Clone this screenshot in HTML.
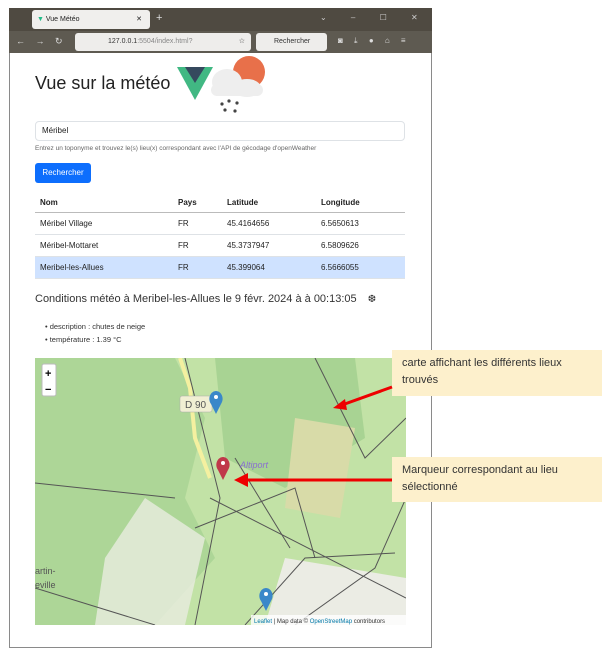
<!DOCTYPE html>
<html><head><meta charset="utf-8"><style>
html,body{margin:0;width:602px;height:656px;overflow:hidden}
body{background:#fff;font-family:"Liberation Sans",sans-serif;position:relative}
.a{position:absolute}
.win{left:9px;top:8px;width:423px;height:640px;border:1px solid #8a8a8a;box-sizing:border-box;background:#fff}
td,th{font-size:8px;text-align:left;padding:0 0 0 5px;height:21px;border-bottom:1px solid #dee2e6}
th{font-weight:bold;height:20px;border-bottom:1px solid #bbb}
</style></head><body>
<div class="a win"></div>
<div class="a" style="left:9px;top:8px;width:423px;height:23px;background:#4f4a41"></div>
<div class="a" style="left:32px;top:10px;width:118px;height:19px;background:#f0efed;border-radius:3px;font-size:7px;line-height:19px;color:#222"><span style="color:#2b8;margin-left:5px">▼</span> Vue Météo<span style="float:right;margin-right:8px">✕</span></div>
<div class="a" style="left:156px;top:12px;color:#ddd;font-size:11px">+</div>
<div class="a" style="left:320px;top:13px;color:#ccc;font-size:8px;word-spacing:22px">⌄ – ☐ ✕</div>
<div class="a" style="left:9px;top:31px;width:423px;height:22px;background:#5e5a51"></div>
<div class="a" style="left:16px;top:36px;color:#ddd;font-size:9px;word-spacing:8px">← → ↻</div>
<div class="a" style="left:75px;top:33px;width:176px;height:18px;background:#eeedeb;border-radius:3px;font-size:7px;line-height:18px;color:#333;padding-left:33px;box-sizing:border-box;text-align:left">127.0.0.1<span style="color:#888">:5504/index.html?</span><span style="position:absolute;right:6px">☆</span></div>
<div class="a" style="left:256px;top:33px;width:71px;height:18px;background:#eeedeb;border-radius:3px;font-size:7px;line-height:18px;color:#333;padding-left:18px;box-sizing:border-box">Rechercher</div>
<div class="a" style="left:338px;top:36px;color:#ddd;font-size:8px;word-spacing:9px">◙ ⤓ ● ⌂ ≡</div>

<div class="a" style="left:35px;top:73px;font-size:18px;color:#222;white-space:nowrap">Vue sur la météo</div>
<svg class="a" style="left:175px;top:55px" width="95" height="60">
<polygon points="2,12 38,12 20,45" fill="#41b883"/><polygon points="10,12 30,12 20,28" fill="#35495e"/>
<circle cx="74" cy="17" r="16" fill="#e8704a"/>
<ellipse cx="52" cy="27" rx="15" ry="13" fill="#eee"/><ellipse cx="72" cy="33" rx="14" ry="9" fill="#eee"/><rect x="36" y="29" width="52" height="12" rx="6" fill="#eee"/>
<g fill="#444"><circle cx="47" cy="49" r="1.6"/><circle cx="54" cy="46" r="1.6"/><circle cx="62" cy="48" r="1.6"/><circle cx="50" cy="55" r="1.6"/><circle cx="60" cy="56" r="1.6"/></g>
</svg>
<div class="a" style="left:35px;top:121px;width:370px;height:20px;border:1px solid #dee2e6;border-radius:4px;box-sizing:border-box;font-size:8px;line-height:18px;padding-left:6px;color:#222">Méribel</div>
<div class="a" style="left:35px;top:145px;font-size:6.5px;color:#666;white-space:nowrap">Entrez un toponyme et trouvez le(s) lieu(x) correspondant avec l'API de gécodage d'openWeather</div>
<div class="a" style="left:35px;top:163px;width:56px;height:20px;background:#0d6efd;border-radius:3px;color:#fff;font-size:8px;line-height:20px;text-align:center">Rechercher</div>
<table class="a" style="left:35px;top:192px;width:370px;border-collapse:collapse;color:#222">
<tr><th style="width:133px">Nom</th><th style="width:44px">Pays</th><th style="width:89px">Latitude</th><th>Longitude</th></tr>
<tr><td>Méribel Village</td><td>FR</td><td>45.4164656</td><td>6.5650613</td></tr>
<tr><td>Méribel-Mottaret</td><td>FR</td><td>45.3737947</td><td>6.5809626</td></tr>
<tr style="background:#cfe2ff"><td>Meribel-les-Allues</td><td>FR</td><td>45.399064</td><td>6.5666055</td></tr>
</table>
<div class="a" style="left:35px;top:293px;font-size:11px;color:#333;white-space:nowrap">Conditions météo à Meribel-les-Allues le 9 févr. 2024 à à 00:13:05 <span style="margin-left:8px;font-size:10px">❆</span></div>
<div class="a" style="left:45px;top:320px;font-size:7.5px;color:#333;line-height:13px;white-space:nowrap">• description : chutes de neige<br>• température : 1.39 °C</div>

<svg class="a" style="left:35px;top:358px" width="371" height="267">
<rect width="371" height="267" fill="#c2e2a6"/>
<path d="M0 0 H140 L170 60 L150 140 L180 200 L120 267 H0Z" fill="#add697"/>
<path d="M180 0 H320 L330 80 L250 130 L190 100Z" fill="#a8d393"/>
<path d="M260 60 L320 70 L305 160 L250 150Z" fill="#d8dba8"/>
<path d="M110 140 L170 180 L150 267 H60 L70 200Z" fill="#e9ece0" opacity=".8"/>
<path d="M250 200 L371 220 L371 267 H230Z" fill="#ebece4"/>
<path d="M145 0 L155 30 L160 80 L175 120" stroke="#f4f0a0" stroke-width="4" fill="none"/>
<g stroke="#555" stroke-width="1" fill="none"><path d="M150 0 L185 140 L160 267"/><path d="M175 140 L371 240"/><path d="M0 125 L140 140"/><path d="M0 230 L120 267"/><path d="M260 267 L340 210 L371 140"/><path d="M210 267 L270 200 L360 195"/><path d="M280 0 L330 100 L371 60"/><path d="M160 170 L260 130 L280 200"/><path d="M200 100 L255 190"/></g>
<rect x="145" y="38" width="32" height="16" rx="2" fill="#f1efd3" stroke="#aaa" stroke-width=".5"/><text x="150" y="50" font-size="10" fill="#555" font-family="Liberation Sans">D 90</text>
<text x="205" y="110" font-size="9" fill="#8a6fd0" font-style="italic" font-family="Liberation Sans">Altiport</text>
<text x="0" y="216" font-size="9" fill="#555" font-family="Liberation Sans">artin-</text><text x="0" y="230" font-size="9" fill="#555" font-family="Liberation Sans">eville</text>
<path d="M176 46 C172 40 176 33 181 33 C186 33 190 40 186 46 L181 56Z" fill="#3a88c9"/><circle cx="181" cy="39" r="2" fill="#fff"/>
<path d="M183 112 C179 106 183 99 188 99 C193 99 197 106 193 112 L188 122Z" fill="#c0384a"/><circle cx="188" cy="105" r="2" fill="#fff"/>
<path d="M226 243 C222 237 226 230 231 230 C236 230 240 237 236 243 L231 253Z" fill="#3a88c9"/><circle cx="231" cy="236" r="2" fill="#fff"/>
<rect x="7" y="6" width="14" height="32" rx="2" fill="#fff" stroke="#bbb"/><text x="10" y="19" font-size="11" font-weight="bold" font-family="Liberation Sans">+</text><text x="10" y="35" font-size="11" font-weight="bold" font-family="Liberation Sans">−</text>
<rect x="216" y="257" width="155" height="10" fill="#fff" opacity=".8"/>
<text x="219" y="265" font-size="6" fill="#333" font-family="Liberation Sans"><tspan fill="#0078a8">Leaflet</tspan> | Map data © <tspan fill="#0078a8">OpenStreetMap</tspan> contributors</text>
</svg>
<div class="a" style="left:392px;top:350px;width:210px;height:46px;background:#fdf0cc;font-size:11px;line-height:17px;color:#333;padding:5px 10px;box-sizing:border-box">carte affichant les différents lieux trouvés</div>
<div class="a" style="left:392px;top:457px;width:210px;height:45px;background:#fdf0cc;font-size:11px;line-height:17px;color:#333;padding:5px 10px;box-sizing:border-box">Marqueur correspondant au lieu sélectionné</div>
<svg class="a" style="left:0;top:0" width="602" height="656">
<line x1="392" y1="387" x2="342" y2="405" stroke="#e00" stroke-width="3"/><polygon points="333,408 345,399 347,410" fill="#e00"/>
<line x1="392" y1="480" x2="245" y2="480" stroke="#e00" stroke-width="3"/><polygon points="234,480 248,473 248,487" fill="#e00"/>
</svg>
</body></html>
